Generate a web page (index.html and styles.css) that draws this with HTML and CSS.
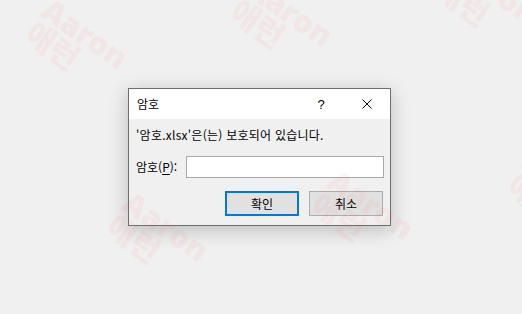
FILE: index.html
```html
<!DOCTYPE html>
<html lang="ko">
	<head>
		<meta charset="UTF-8" />
		<meta name="viewport" content="width=device-width, initial-scale=1.0" />
		<title>암호</title>
		<link rel="stylesheet" href="styles.css">
	</head>
	<body>
		<div class="dialog">
			<div class="titlebar">
				<span class="title">암호</span>
				<span class="caption-btn help">?</span>
				<span class="caption-btn">
					<svg width="10" height="10" viewBox="0 0 10 10">
						<path d="M0.5 0.5L9.5 9.5M9.5 0.5L0.5 9.5" stroke="#000" stroke-width="1" fill="none" />
					</svg>
				</span>
			</div>
			<div class="content">
				<p class="message">'암호.xlsx'은(는) 보호되어 있습니다.</p>
				<div class="field">
					<label for="password">암호(<u>P</u>):</label>
					<input type="password" id="password" />
				</div>
				<div class="buttons">
					<button class="btn default">확인</button>
					<button class="btn">취소</button>
				</div>
			</div>
		</div>

		<!-- watermark tiles -->
		<div class="watermark">
			<div class="wm wm1">Aaron<br />애런</div>
			<div class="wm wm2">Aaron<br />애런</div>
			<div class="wm wm3">Aaron<br />애런</div>
			<div class="wm wm4">Aaron<br />애런</div>
			<div class="wm wm5">Aaron<br />애런</div>
			<div class="wm wm6">Aaron<br />애런</div>
		</div>
	</body>
</html>
```

FILE: styles.css
```css
body {
	margin: 0;
	height: 100vh;
	display: grid;
	place-items: center;
	background-color: #f0f0f0;
	font-family: "Noto Sans CJK KR", sans-serif;
	font-size: 12px;
	color: #000;
}
.dialog {
	box-sizing: border-box;
	width: 263px;
	height: 138px;
	margin-right: 3px;
	border: 1px solid #6e6e6e;
	background-color: #f0f0f0;
	box-shadow: 0 4px 18px rgba(0, 0, 0, 0.22);
}
.titlebar {
	display: flex;
	align-items: center;
	height: 30px;
	padding-left: 8px;
	background-color: #fff;
}
.title {
	flex: 1;
	line-height: 16px;
}
.caption-btn {
	width: 46px;
	height: 30px;
	display: flex;
	align-items: center;
	justify-content: center;
}
.help {
	font-family: "Liberation Sans", sans-serif;
	font-size: 13px;
}
.content {
	padding: 8px 6px 9px 7px;
}
.message {
	margin: 0;
	line-height: 16px;
	letter-spacing: 0.25px;
}
.field {
	display: flex;
	align-items: center;
	margin-top: 13px;
	height: 22px;
}
.field label {
	flex: 0 0 50px;
	line-height: 16px;
}
.field u {
	text-underline-offset: 2px;
}
.field input {
	flex: 1;
	box-sizing: border-box;
	height: 22px;
	margin: 0;
	border: 1px solid #a8a8a8;
	background-color: #fff;
	outline: none;
}
.buttons {
	display: flex;
	justify-content: flex-end;
	gap: 10px;
	margin-top: 13px;
	margin-right: 1px;
}
.btn {
	box-sizing: border-box;
	width: 74px;
	height: 25px;
	padding: 0;
	border: 1px solid #adadad;
	background-color: #e1e1e1;
	font-family: inherit;
	font-size: 12px;
	color: #000;
}
.btn.default {
	border: 2px solid #0078d7;
}
.watermark {
	position: fixed;
	inset: 0;
	overflow: hidden;
	pointer-events: none;
}
.wm {
	position: absolute;
	transform: rotate(35deg);
	transform-origin: 0 0;
	font-family: "Noto Sans", "Noto Sans CJK KR", sans-serif;
	font-weight: 900;
	font-size: 31px;
	line-height: 29px;
	color: rgba(255, 100, 100, 0.07);
	white-space: nowrap;
}
.wm1 {
	left: 54px;
	top: -6px;
}
.wm2 {
	left: 259px;
	top: -28px;
}
.wm3 {
	left: 464px;
	top: -50px;
}
.wm4 {
	left: 135px;
	top: 187px;
}
.wm5 {
	left: 340px;
	top: 165px;
}
.wm6 {
	left: 536px;
	top: 146px;
}
```
